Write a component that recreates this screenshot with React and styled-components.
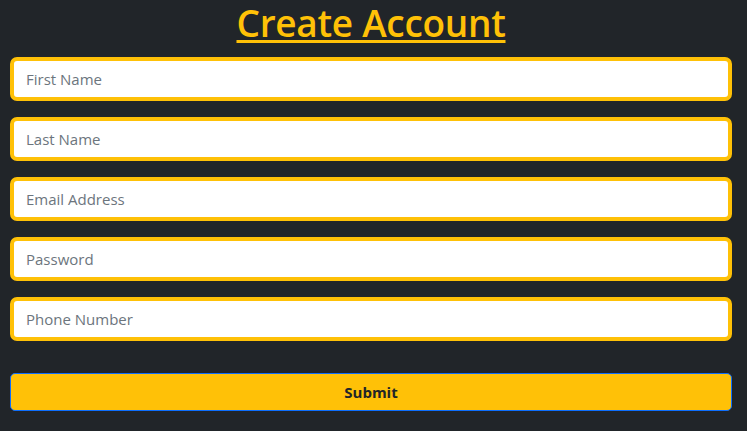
import React from "react";
import styled, { createGlobalStyle } from "styled-components";

const GlobalStyle = createGlobalStyle`
  html, body { margin: 0; padding: 0; background: #212529; }
  body { font-family: "Open Sans", "Noto Sans", sans-serif; }
  * { box-sizing: border-box; }
`;

const Page = styled.div`
  min-height: 431px;
  background: #212529;
  padding: 0 15px 0 10px;
`;

const Title = styled.h1`
  margin: 0;
  text-align: center;
  color: #ffc107;
  font-size: 37px;
  font-weight: 600;
  line-height: 46px;
  text-decoration: underline;
  text-decoration-thickness: 3px;
  text-underline-offset: 3px;
  letter-spacing: -0.3px;
`;

const Form = styled.form`
  display: flex;
  flex-direction: column;
  gap: 16px;
  margin-top: 11px;
`;

const Field = styled.input`
  display: block;
  width: 100%;
  height: 44px;
  padding: 0 12px;
  border: 4px solid #ffc107;
  border-radius: 7px;
  background: #fff;
  font-family: "Open Sans", "Noto Sans", sans-serif;
  font-size: 15px;
  color: #212529;
  outline: none;

  &::placeholder { color: #6c757d; }
`;

const SubmitButton = styled.button`
  margin-top: 16px;
  height: 38px;
  width: 100%;
  border: 1px solid #0d6efd;
  border-radius: 5px;
  background: #ffc107;
  color: #212529;
  font-family: "Open Sans", "Noto Sans", sans-serif;
  font-size: 15px;
  font-weight: 700;
  cursor: pointer;
`;

const fields = [
  { name: "firstName", placeholder: "First Name", type: "text" },
  { name: "lastName", placeholder: "Last Name", type: "text" },
  { name: "email", placeholder: "Email Address", type: "email" },
  { name: "password", placeholder: "Password", type: "password" },
  { name: "phone", placeholder: "Phone Number", type: "tel" },
];

export default function App() {
  return (
    <>
      <GlobalStyle />
      <Page>
        <Title>Create Account</Title>
        <Form onSubmit={(e) => e.preventDefault()}>
          {fields.map((f) => (
            <Field key={f.name} name={f.name} type={f.type} placeholder={f.placeholder} />
          ))}
          <SubmitButton type="submit">Submit</SubmitButton>
        </Form>
      </Page>
    </>
  );
}
